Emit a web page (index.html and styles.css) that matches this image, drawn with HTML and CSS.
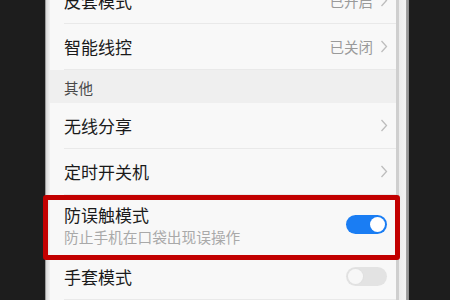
FILE: index.html
```html
<!DOCTYPE html>
<html lang="zh-CN">
<head>
<meta charset="utf-8">
<link rel="stylesheet" href="styles.css">
</head>
<body>
<div class="stage">
  <div class="dark-left"></div>
  <div class="frame-left"></div>
  <div class="screen">
    <div class="list">
      <div class="row">
        <span class="title">皮套模式</span>
        <span class="value">已开启</span>
        <svg class="chev" width="8" height="13" viewBox="0 0 8 13"><polyline points="1.5,1 6.5,6.5 1.5,12" fill="none" stroke="#bdbdbd" stroke-width="1.3"/></svg>
      </div>
      <div class="row">
        <span class="title">智能线控</span>
        <span class="value">已关闭</span>
        <svg class="chev" width="8" height="13" viewBox="0 0 8 13"><polyline points="1.5,1 6.5,6.5 1.5,12" fill="none" stroke="#bdbdbd" stroke-width="1.3"/></svg>
      </div>
      <div class="section">其他</div>
      <div class="row">
        <span class="title">无线分享</span>
        <svg class="chev" width="8" height="13" viewBox="0 0 8 13"><polyline points="1.5,1 6.5,6.5 1.5,12" fill="none" stroke="#bdbdbd" stroke-width="1.3"/></svg>
      </div>
      <div class="row">
        <span class="title">定时开关机</span>
        <svg class="chev" width="8" height="13" viewBox="0 0 8 13"><polyline points="1.5,1 6.5,6.5 1.5,12" fill="none" stroke="#bdbdbd" stroke-width="1.3"/></svg>
      </div>
      <div class="row row-tall">
        <div class="texts">
          <span class="title">防误触模式</span>
          <span class="sub">防止手机在口袋出现误操作</span>
        </div>
        <span class="toggle on"><span class="knob"></span></span>
        <div class="highlight"></div>
      </div>
      <div class="row">
        <span class="title">手套模式</span>
        <span class="toggle off"><span class="knob"></span></span>
      </div>
    </div>
  </div>
  <div class="frame-right"></div>
  <div class="dark-right"></div>
</div>
</body>
</html>
```

FILE: styles.css
```css
html, body {
  margin: 0;
  padding: 0;
  width: 450px;
  height: 300px;
  overflow: hidden;
  background: #1d1d1d;
}

.stage {
  display: flex;
  width: 450px;
  height: 300px;
  font-family: "Noto Sans CJK SC", "Noto Sans", sans-serif;
}

.dark-left {
  width: 45px;
  flex: none;
  background: #1d1d1d;
}

.frame-left {
  width: 5px;
  flex: none;
  background: linear-gradient(to right, #9c9c9c 0, #9c9c9c 1px, #d9d9d9 1px, #e6e6e6 3px, #f2f2f2 5px);
  position: relative;
  z-index: 0;
}

.screen {
  width: 346px;
  flex: none;
  background: #f8f8f8;
  position: relative;
  z-index: 1;
}

.frame-right {
  width: 13px;
  flex: none;
  background: linear-gradient(to right, #cfcfcf 0, #cfcfcf 3px, #ececec 3px, #f3f3f3 10px, #a5a5a5 10px, #8a8a8a 13px);
}

.dark-right {
  flex: 1;
  background: #1d1d1d;
}

.list {
  margin-top: -22px;
  display: flex;
  flex-direction: column;
}

.row {
  height: 46px;
  box-sizing: border-box;
  margin-left: 14px;
  padding-right: 8px;
  border-bottom: 1px solid #e9e9e9;
  display: flex;
  align-items: center;
  position: relative;
}

.row-tall {
  height: 59px;
  border-bottom: none;
}

.title {
  font-size: 17px;
  color: #1a1a1a;
  line-height: 22px;
  flex: 1;
}

.value {
  font-size: 14.5px;
  color: #9a9a9a;
  margin-right: 7px;
}

.chev {
  display: block;
  flex: none;
}

.section {
  height: 33px;
  background: #efefef;
  font-size: 14.5px;
  color: #4a4a4a;
  padding-left: 14px;
  padding-top: 2px;
  box-sizing: border-box;
  display: flex;
  align-items: center;
}

.texts {
  flex: 1;
  display: flex;
  flex-direction: column;
  padding-top: 1px;
}

.sub {
  font-size: 14.7px;
  color: #a9a9a9;
  line-height: 21px;
}

.toggle {
  width: 41px;
  height: 19px;
  border-radius: 10px;
  box-sizing: border-box;
  padding: 2px;
  flex: none;
  display: flex;
  margin-right: 1px;
}

.toggle .knob {
  width: 15px;
  height: 15px;
  border-radius: 50%;
  background: #ffffff;
}

.toggle.on {
  background: #1a7df3;
  justify-content: flex-end;
}

.toggle.off {
  background: #e3e3e3;
  justify-content: flex-start;
}

.toggle.off .knob {
  background: #f7f7f7;
  box-shadow: 0 0 0 1px #e0e0e0;
}

.highlight {
  position: absolute;
  left: -21px;
  right: -4px;
  top: 0;
  bottom: -6px;
  border: 5px solid #c20000;
  border-radius: 3px;
  pointer-events: none;
}
```
